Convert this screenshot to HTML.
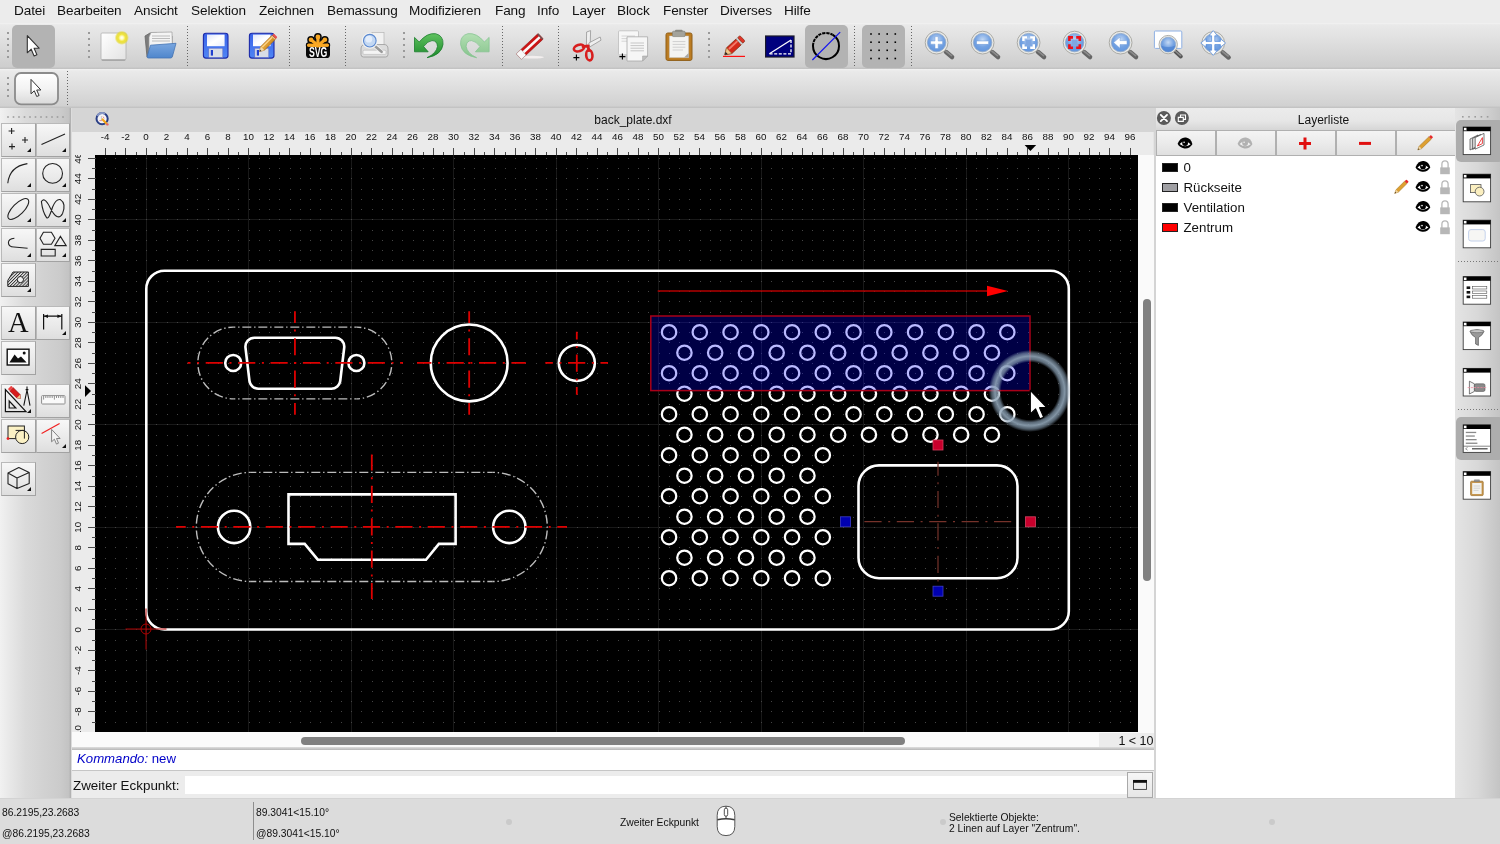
<!DOCTYPE html>
<html lang="de"><head><meta charset="utf-8"><title>back_plate.dxf - QCAD</title>
<style>
html,body{margin:0;padding:0}
body{width:1500px;height:844px;position:relative;overflow:hidden;background:#dcdcdc;font-family:'Liberation Sans',sans-serif;color:#000}
.abs{position:absolute}
svg.abs{will-change:transform}
#app{left:0;top:0;width:1500px;height:844px;will-change:transform}
#menubar{left:0;top:0;width:1500px;height:23px;background:#ececec}
#menubar span{position:absolute;top:2px;font-size:13.6px;line-height:17px;letter-spacing:-0.12px;white-space:nowrap;color:#111}
#tb1{left:0;top:23px;width:1500px;height:46px;background:linear-gradient(#f3f3f3,#e9e9e9 4%,#e2e2e2 30%,#cecece 95%,#c0c0c0)}
#tb2{left:0;top:69px;width:1500px;height:39px;background:linear-gradient(#f3f3f3,#eaeaea 5%,#e3e3e3 30%,#d1d1d1 94%,#bfbfbf)}
.actbtn{position:absolute;background:#b3b3b3;border-radius:5px}
.vdots{position:absolute;width:2px;background:repeating-linear-gradient(#9a9a9a 0 2px,transparent 2px 6px)}
.vsep{position:absolute;width:1px;top:26px;height:41px;background:repeating-linear-gradient(#666 0 1px,transparent 1px 3px)}
#left{left:0;top:108px;width:71px;height:690px;background:linear-gradient(90deg,#f1f1f1,#e9e9e9 12%,#dadada 36%,#d2d2d2 60%,#cbcbcb 85%,#c3c3c3 97%,#adadad)}
.tbtn{position:absolute;width:33.5px;height:33.5px;box-sizing:border-box;border:1px solid #b9b9b9;border-right-color:#a2a2a2;border-bottom-color:#a2a2a2;background:linear-gradient(#f7f7f7,#e9e9e9 60%,#dedede)}
.tbtn i{position:absolute;right:3.4px;bottom:3.4px;width:0;height:0;border-left:4.8px solid transparent;border-bottom:4.8px solid #111}
#tabbar{left:72px;top:108px;width:1081.5px;height:24px;background:#d5d5d5}
#tabbar span{position:absolute;left:0;width:1122px;text-align:center;top:5px;font-size:12px;line-height:14px;color:#111}
#hscroll{left:72px;top:732px;width:1081.5px;height:18px;background:#fafafa}
#hsep{left:72px;top:747.3px;width:1081.5px;height:2.7px;background:linear-gradient(#dedede,#b6b6b6)}
#vscroll{left:1138px;top:155px;width:15.5px;height:577px;background:#fafafa}
.thumb{position:absolute;background:#808080;border-radius:5px}
#zoomlbl{left:1099px;top:733px;width:54.5px;height:15px;background:#ececec;font-size:12.5px;line-height:16px;text-align:right;color:#111}
#cmdhist{left:72px;top:750px;width:1081.5px;height:21px;background:#fff;border-bottom:1px solid #c6c6c6;box-sizing:border-box;font-size:13.2px;line-height:17px;color:#0000c8}
#cmdline{left:72px;top:771px;width:1081.5px;height:27px;background:#ececec}
#cmdline .lbl{position:absolute;left:1px;top:7px;font-size:13.4px;line-height:16px;color:#111}
#cmdline .inp{position:absolute;left:113px;top:4.7px;width:942.3px;height:18.2px;background:#fff}
#cmdline .btn{position:absolute;left:1055.3px;top:1.4px;width:25.8px;height:25.2px;box-sizing:border-box;border:1px solid #a9a9a9;background:linear-gradient(#f6f6f6,#e6e6e6)}
#layers{left:1153.5px;top:108px;width:301.5px;height:690px;background:#fff;border-left:2px solid #d4d4d4;box-sizing:border-box}
#ltitle{left:0;top:0;width:300px;height:22px;box-sizing:border-box;padding-left:36px;padding-top:2px;background:linear-gradient(#ececec,#e6e6e6 60%,#d6d6d6);font-size:12px;line-height:21px;text-align:center;color:#111}
#lbtns{left:0;top:22px;width:300px;height:26px;background:#b0b0b0}
.lbtn{position:absolute;top:1px;height:24px;width:58px;background:linear-gradient(#f4f4f4,#ebebeb 50%,#e0e0e0)}
.lrow{position:absolute;left:0;width:300px;height:20px;font-size:13.3px;line-height:21px;color:#111}
.lrow .sw{position:absolute;left:6px;top:6px;width:16px;height:9px;box-sizing:border-box;border:1px solid #222}
.lrow span{position:absolute;left:28px;top:0}
#rstrip{left:1455px;top:108px;width:45px;height:690px;background:linear-gradient(90deg,#e4e4e4,#d8d8d8 50%,#c4c4c4)}
.hdots{position:absolute;height:1px;background:repeating-linear-gradient(90deg,#777 0 1px,transparent 1px 3px)}
#status{left:0;top:798px;width:1500px;height:46px;background:#dcdcdc;font-size:10.3px;color:#111}
#status span{position:absolute;white-space:nowrap;line-height:12px;letter-spacing:0}
.sdot{position:absolute;width:6px;height:6px;border-radius:3px;background:#cacaca;top:21px}
</style></head><body><div id="app" class="abs">
<div id="menubar" class="abs"><span style="left:14px">Datei</span><span style="left:57px">Bearbeiten</span><span style="left:134px">Ansicht</span><span style="left:191px">Selektion</span><span style="left:259px">Zeichnen</span><span style="left:327px">Bemassung</span><span style="left:409px">Modifizieren</span><span style="left:495px">Fang</span><span style="left:537px">Info</span><span style="left:572px">Layer</span><span style="left:617px">Block</span><span style="left:663px">Fenster</span><span style="left:720px">Diverses</span><span style="left:784px">Hilfe</span></div>
<div id="tb1" class="abs">
<div class="actbtn" style="left:12px;top:2px;width:43px;height:43px"></div>
<div class="actbtn" style="left:805px;top:2px;width:43px;height:43px"></div>
<div class="actbtn" style="left:862px;top:2px;width:43px;height:43px"></div>
<div class="vdots" style="left:7px;top:9px;height:26px"></div>
<div class="vdots" style="left:88px;top:9px;height:26px"></div>
<div class="vdots" style="left:403px;top:9px;height:26px"></div>
<div class="vdots" style="left:708px;top:9px;height:26px"></div>
<div class="vsep" style="left:187px;top:3px"></div>
<div class="vsep" style="left:289px;top:3px"></div>
<div class="vsep" style="left:345px;top:3px"></div>
<div class="vsep" style="left:502px;top:3px"></div>
<div class="vsep" style="left:558px;top:3px"></div>
<div class="vsep" style="left:854px;top:3px"></div>
<div class="vsep" style="left:911px;top:3px"></div>
</div>
<div id="tb2" class="abs">
<div class="vdots" style="left:7px;top:8px;height:22px"></div>
<div class="vsep" style="left:67px;top:2px;height:35px"></div>
</div>
<div id="left" class="abs"><div class="tbtn" style="left:1.3px;top:15px;width:34.3px"><i></i></div><div class="tbtn" style="left:36.4px;top:15px;width:33.7px"><i></i></div><div class="tbtn" style="left:1.3px;top:50px;width:34.3px"><i></i></div><div class="tbtn" style="left:36.4px;top:50px;width:33.7px"><i></i></div><div class="tbtn" style="left:1.3px;top:85px;width:34.3px"><i></i></div><div class="tbtn" style="left:36.4px;top:85px;width:33.7px"><i></i></div><div class="tbtn" style="left:1.3px;top:120px;width:34.3px"><i></i></div><div class="tbtn" style="left:36.4px;top:120px;width:33.7px"><i></i></div><div class="tbtn" style="left:1.3px;top:155px;width:34.3px"><i></i></div><div class="tbtn" style="left:1.3px;top:198px;width:34.3px"></div><div class="tbtn" style="left:36.4px;top:198px;width:33.7px"><i></i></div><div class="tbtn" style="left:1.3px;top:233px;width:34.3px"></div><div class="tbtn" style="left:1.3px;top:276px;width:34.3px"><i></i></div><div class="tbtn" style="left:36.4px;top:276px;width:33.7px"></div><div class="tbtn" style="left:1.3px;top:311px;width:34.3px"></div><div class="tbtn" style="left:36.4px;top:311px;width:33.7px"><i></i></div><div class="tbtn" style="left:1.3px;top:354px;width:34.3px"><i></i></div></div>
<div id="tabbar" class="abs"><span>back_plate.dxf</span></div>
<div id="vscroll" class="abs"><div class="thumb" style="left:5px;top:143.5px;width:8px;height:282px"></div></div>
<div id="hscroll" class="abs"><div class="thumb" style="left:229px;top:5px;width:604px;height:8px"></div></div>
<div id="zoomlbl" class="abs">1 &lt; 10</div><div id="hsep" class="abs"></div>
<div id="cmdhist" class="abs"><span style="position:absolute;left:5px;top:0"><i>Kommando:</i> new</span></div>
<div id="cmdline" class="abs"><span class="lbl">Zweiter Eckpunkt:</span><div class="inp"></div><div class="btn"></div></div>
<div id="layers" class="abs"><div id="ltitle" class="abs">Layerliste</div><div id="lbtns" class="abs">
<div class="lbtn" style="left:1px"></div>
<div class="lbtn" style="left:61px"></div>
<div class="lbtn" style="left:121px"></div>
<div class="lbtn" style="left:181px"></div>
<div class="lbtn" style="left:241px"></div>
</div>
<div class="lrow" style="top:49px"><div class="sw" style="background:#000"></div><span>0</span></div>
<div class="lrow" style="top:69px"><div class="sw" style="background:#a0a0a4"></div><span>Rückseite</span></div>
<div class="lrow" style="top:89px"><div class="sw" style="background:#000"></div><span>Ventilation</span></div>
<div class="lrow" style="top:109px"><div class="sw" style="background:#f00"></div><span>Zentrum</span></div>
</div>
<div id="rstrip" class="abs">
<div class="actbtn" style="left:1px;top:12px;width:48px;height:42px;background:#adadad"></div>
<div class="actbtn" style="left:1px;top:309px;width:48px;height:43px;background:#adadad"></div>
<div class="hdots" style="left:3px;top:153px;width:42px"></div>
<div class="hdots" style="left:3px;top:301px;width:42px"></div>
</div>
<div id="status" class="abs"><div class="abs" style="left:0;top:0;width:1500px;height:1px;background:#d3d3d3"></div>
<span style="left:2px;top:9px">86.2195,23.2683</span><span style="left:2px;top:29.5px">@86.2195,23.2683</span>
<div class="abs" style="left:253px;top:4px;width:1px;height:38px;background:#8e8e8e"></div>
<span style="left:256px;top:9px">89.3041&lt;15.10°</span><span style="left:256px;top:29.5px">@89.3041&lt;15.10°</span>
<span style="left:620px;top:19px">Zweiter Eckpunkt</span>
<span style="left:949px;top:13.7px">Selektierte Objekte:</span><span style="left:949px;top:24.7px">2 Linen auf Layer "Zentrum".</span>
<div class="sdot" style="left:506px"></div>
<div class="sdot" style="left:940px"></div>
<div class="sdot" style="left:1269px"></div>
</div>
<svg class="abs" style="left:0;top:0" width="1500" height="844" viewBox="0 0 1500 844">
<defs>
<pattern id="dots" x="146" y="588" width="41" height="41" patternUnits="userSpaceOnUse"><g fill="#444" shape-rendering="crispEdges"><rect x="0" y="0" width="1" height="1"/><rect x="0" y="11" width="1" height="1"/><rect x="0" y="21" width="1" height="1"/><rect x="0" y="31" width="1" height="1"/><rect x="10" y="0" width="1" height="1"/><rect x="10" y="11" width="1" height="1"/><rect x="10" y="21" width="1" height="1"/><rect x="10" y="31" width="1" height="1"/><rect x="21" y="0" width="1" height="1"/><rect x="21" y="11" width="1" height="1"/><rect x="21" y="21" width="1" height="1"/><rect x="21" y="31" width="1" height="1"/><rect x="31" y="0" width="1" height="1"/><rect x="31" y="11" width="1" height="1"/><rect x="31" y="21" width="1" height="1"/><rect x="31" y="31" width="1" height="1"/></g></pattern>
<clipPath id="cclip"><rect x="95" y="155" width="1043" height="577"/></clipPath>
<clipPath id="vrclip"><rect x="72" y="155" width="23" height="577"/></clipPath>
<radialGradient id="glow" cx="0.5" cy="0.5" r="0.5"><stop offset="0.70" stop-color="#8298ac" stop-opacity="0"/><stop offset="0.77" stop-color="#8298ac" stop-opacity="0.7"/><stop offset="0.85" stop-color="#93a8ba" stop-opacity="0.88"/><stop offset="0.93" stop-color="#8298ac" stop-opacity="0.6"/><stop offset="1" stop-color="#8298ac" stop-opacity="0"/></radialGradient>
</defs>
<rect x="72" y="132" width="1081.5" height="23" fill="#ebebeb"/>
<rect x="72" y="132" width="23" height="600" fill="#ebebeb"/>
<rect x="95" y="155" width="1043" height="577" fill="#000"/>
<g clip-path="url(#cclip)">
<rect x="146" y="155" width="1" height="577" fill="#191919"/>
<rect x="248" y="155" width="1" height="577" fill="#191919"/>
<rect x="351" y="155" width="1" height="577" fill="#191919"/>
<rect x="453" y="155" width="1" height="577" fill="#191919"/>
<rect x="556" y="155" width="1" height="577" fill="#191919"/>
<rect x="658" y="155" width="1" height="577" fill="#191919"/>
<rect x="761" y="155" width="1" height="577" fill="#191919"/>
<rect x="863" y="155" width="1" height="577" fill="#191919"/>
<rect x="966" y="155" width="1" height="577" fill="#191919"/>
<rect x="1068" y="155" width="1" height="577" fill="#191919"/>
<rect x="95" y="732" width="1043" height="1" fill="#191919"/>
<rect x="95" y="629" width="1043" height="1" fill="#191919"/>
<rect x="95" y="527" width="1043" height="1" fill="#191919"/>
<rect x="95" y="424" width="1043" height="1" fill="#191919"/>
<rect x="95" y="322" width="1043" height="1" fill="#191919"/>
<rect x="95" y="219" width="1043" height="1" fill="#191919"/>
<rect x="95" y="155" width="1043" height="577" fill="url(#dots)"/>
<rect x="146.3" y="270.7" width="922.5" height="358.75" rx="18.2" fill="none" stroke="#fff" stroke-width="2.6"/>
<path d="M233.12 327.08 H356.53" fill="none" stroke="#bcbcbc" stroke-width="1.4" stroke-dasharray="9 2.8 1.4 2.8" stroke-dashoffset="6.8"/>
<path d="M233.12 398.83 H356.53" fill="none" stroke="#bcbcbc" stroke-width="1.4" stroke-dasharray="9 2.8 1.4 2.8" stroke-dashoffset="6.8"/>
<path d="M233.12 327.08 A35.88 35.88 0 0 0 233.12 398.83" fill="none" stroke="#bcbcbc" stroke-width="1.4" stroke-dasharray="9 2.8 1.4 2.8" stroke-dashoffset="4.15"/>
<path d="M356.53 327.08 A35.88 35.88 0 0 1 356.53 398.83" fill="none" stroke="#bcbcbc" stroke-width="1.4" stroke-dasharray="9 2.8 1.4 2.8" stroke-dashoffset="4.15"/>
<path d="M245.50 347.77 A9 9 0 0 1 254.44 337.70 L335.26 337.70 A9 9 0 0 1 344.20 347.77 L340.25 380.77 A9 9 0 0 1 331.31 388.70 L258.39 388.70 A9 9 0 0 1 249.45 380.77 Z" fill="none" stroke="#fff" stroke-width="2.6"/>
<circle cx="233.2" cy="362.95" r="8" fill="none" stroke="#fff" stroke-width="2.6"/>
<circle cx="356.4" cy="362.95" r="8" fill="none" stroke="#fff" stroke-width="2.6"/>
<circle cx="469.18" cy="362.95" r="38.4" fill="none" stroke="#fff" stroke-width="2.6"/>
<circle cx="576.8" cy="362.95" r="18" fill="none" stroke="#fff" stroke-width="2.6"/>
<path d="M250.9 472.35 H492.7" fill="none" stroke="#bcbcbc" stroke-width="1.4" stroke-dasharray="9 2.8 1.4 2.8" stroke-dashoffset="3.6"/>
<path d="M250.9 581.55 H492.7" fill="none" stroke="#bcbcbc" stroke-width="1.4" stroke-dasharray="9 2.8 1.4 2.8" stroke-dashoffset="3.6"/>
<path d="M250.9 472.35 A54.6 54.6 0 0 0 250.9 581.55" fill="none" stroke="#bcbcbc" stroke-width="1.4" stroke-dasharray="9 2.8 1.4 2.8" stroke-dashoffset="6.73"/>
<path d="M492.7 472.35 A54.6 54.6 0 0 1 492.7 581.55" fill="none" stroke="#bcbcbc" stroke-width="1.4" stroke-dasharray="9 2.8 1.4 2.8" stroke-dashoffset="6.73"/>
<path d="M288.5 494.4 H455.6 V543.9 H438.9 L426 559.7 H317.8 L304.7 543.9 H288.5 Z" fill="none" stroke="#fff" stroke-width="2.6" stroke-linejoin="miter"/>
<circle cx="234.1" cy="526.95" r="16.2" fill="none" stroke="#fff" stroke-width="2.6"/>
<circle cx="509.3" cy="526.95" r="16.2" fill="none" stroke="#fff" stroke-width="2.6"/>
<g fill="none" stroke="#fff" stroke-width="2.25">
<circle cx="669.05" cy="332.2" r="7.2"/>
<circle cx="699.8" cy="332.2" r="7.2"/>
<circle cx="730.55" cy="332.2" r="7.2"/>
<circle cx="761.3" cy="332.2" r="7.2"/>
<circle cx="792.05" cy="332.2" r="7.2"/>
<circle cx="822.8" cy="332.2" r="7.2"/>
<circle cx="853.55" cy="332.2" r="7.2"/>
<circle cx="884.3" cy="332.2" r="7.2"/>
<circle cx="915.05" cy="332.2" r="7.2"/>
<circle cx="945.8" cy="332.2" r="7.2"/>
<circle cx="976.55" cy="332.2" r="7.2"/>
<circle cx="1007.3" cy="332.2" r="7.2"/>
<circle cx="684.42" cy="352.7" r="7.2"/>
<circle cx="715.17" cy="352.7" r="7.2"/>
<circle cx="745.92" cy="352.7" r="7.2"/>
<circle cx="776.67" cy="352.7" r="7.2"/>
<circle cx="807.42" cy="352.7" r="7.2"/>
<circle cx="838.17" cy="352.7" r="7.2"/>
<circle cx="868.92" cy="352.7" r="7.2"/>
<circle cx="899.67" cy="352.7" r="7.2"/>
<circle cx="930.42" cy="352.7" r="7.2"/>
<circle cx="961.17" cy="352.7" r="7.2"/>
<circle cx="991.92" cy="352.7" r="7.2"/>
<circle cx="669.05" cy="373.2" r="7.2"/>
<circle cx="699.8" cy="373.2" r="7.2"/>
<circle cx="730.55" cy="373.2" r="7.2"/>
<circle cx="761.3" cy="373.2" r="7.2"/>
<circle cx="792.05" cy="373.2" r="7.2"/>
<circle cx="822.8" cy="373.2" r="7.2"/>
<circle cx="853.55" cy="373.2" r="7.2"/>
<circle cx="884.3" cy="373.2" r="7.2"/>
<circle cx="915.05" cy="373.2" r="7.2"/>
<circle cx="945.8" cy="373.2" r="7.2"/>
<circle cx="976.55" cy="373.2" r="7.2"/>
<circle cx="1007.3" cy="373.2" r="7.2"/>
<circle cx="684.42" cy="393.7" r="7.2"/>
<circle cx="715.17" cy="393.7" r="7.2"/>
<circle cx="745.92" cy="393.7" r="7.2"/>
<circle cx="776.67" cy="393.7" r="7.2"/>
<circle cx="807.42" cy="393.7" r="7.2"/>
<circle cx="838.17" cy="393.7" r="7.2"/>
<circle cx="868.92" cy="393.7" r="7.2"/>
<circle cx="899.67" cy="393.7" r="7.2"/>
<circle cx="930.42" cy="393.7" r="7.2"/>
<circle cx="961.17" cy="393.7" r="7.2"/>
<circle cx="991.92" cy="393.7" r="7.2"/>
<circle cx="669.05" cy="414.2" r="7.2"/>
<circle cx="699.8" cy="414.2" r="7.2"/>
<circle cx="730.55" cy="414.2" r="7.2"/>
<circle cx="761.3" cy="414.2" r="7.2"/>
<circle cx="792.05" cy="414.2" r="7.2"/>
<circle cx="822.8" cy="414.2" r="7.2"/>
<circle cx="853.55" cy="414.2" r="7.2"/>
<circle cx="884.3" cy="414.2" r="7.2"/>
<circle cx="915.05" cy="414.2" r="7.2"/>
<circle cx="945.8" cy="414.2" r="7.2"/>
<circle cx="976.55" cy="414.2" r="7.2"/>
<circle cx="1007.3" cy="414.2" r="7.2"/>
<circle cx="684.42" cy="434.7" r="7.2"/>
<circle cx="715.17" cy="434.7" r="7.2"/>
<circle cx="745.92" cy="434.7" r="7.2"/>
<circle cx="776.67" cy="434.7" r="7.2"/>
<circle cx="807.42" cy="434.7" r="7.2"/>
<circle cx="838.17" cy="434.7" r="7.2"/>
<circle cx="868.92" cy="434.7" r="7.2"/>
<circle cx="899.67" cy="434.7" r="7.2"/>
<circle cx="930.42" cy="434.7" r="7.2"/>
<circle cx="961.17" cy="434.7" r="7.2"/>
<circle cx="991.92" cy="434.7" r="7.2"/>
<circle cx="669.05" cy="455.2" r="7.2"/>
<circle cx="699.8" cy="455.2" r="7.2"/>
<circle cx="730.55" cy="455.2" r="7.2"/>
<circle cx="761.3" cy="455.2" r="7.2"/>
<circle cx="792.05" cy="455.2" r="7.2"/>
<circle cx="822.8" cy="455.2" r="7.2"/>
<circle cx="684.42" cy="475.7" r="7.2"/>
<circle cx="715.17" cy="475.7" r="7.2"/>
<circle cx="745.92" cy="475.7" r="7.2"/>
<circle cx="776.67" cy="475.7" r="7.2"/>
<circle cx="807.42" cy="475.7" r="7.2"/>
<circle cx="669.05" cy="496.2" r="7.2"/>
<circle cx="699.8" cy="496.2" r="7.2"/>
<circle cx="730.55" cy="496.2" r="7.2"/>
<circle cx="761.3" cy="496.2" r="7.2"/>
<circle cx="792.05" cy="496.2" r="7.2"/>
<circle cx="822.8" cy="496.2" r="7.2"/>
<circle cx="684.42" cy="516.7" r="7.2"/>
<circle cx="715.17" cy="516.7" r="7.2"/>
<circle cx="745.92" cy="516.7" r="7.2"/>
<circle cx="776.67" cy="516.7" r="7.2"/>
<circle cx="807.42" cy="516.7" r="7.2"/>
<circle cx="669.05" cy="537.2" r="7.2"/>
<circle cx="699.8" cy="537.2" r="7.2"/>
<circle cx="730.55" cy="537.2" r="7.2"/>
<circle cx="761.3" cy="537.2" r="7.2"/>
<circle cx="792.05" cy="537.2" r="7.2"/>
<circle cx="822.8" cy="537.2" r="7.2"/>
<circle cx="684.42" cy="557.7" r="7.2"/>
<circle cx="715.17" cy="557.7" r="7.2"/>
<circle cx="745.92" cy="557.7" r="7.2"/>
<circle cx="776.67" cy="557.7" r="7.2"/>
<circle cx="807.42" cy="557.7" r="7.2"/>
<circle cx="669.05" cy="578.2" r="7.2"/>
<circle cx="699.8" cy="578.2" r="7.2"/>
<circle cx="730.55" cy="578.2" r="7.2"/>
<circle cx="761.3" cy="578.2" r="7.2"/>
<circle cx="792.05" cy="578.2" r="7.2"/>
<circle cx="822.8" cy="578.2" r="7.2"/>
</g>
<rect x="858.5" y="465.4" width="159" height="112.8" rx="20.5" fill="none" stroke="#fff" stroke-width="2.6"/>
<path d="M187.6 362.95 H403" fill="none" stroke="#de0000" stroke-width="1.8" stroke-dasharray="17.2 6.6 2 6.6" stroke-dashoffset="14.3"/>
<path d="M294.93 311.2 V414.7" fill="none" stroke="#de0000" stroke-width="1.8" stroke-dasharray="17.2 6.6 2 6.6" stroke-dashoffset="5.45"/>
<path d="M417 362.95 H525.8" fill="none" stroke="#de0000" stroke-width="1.8" stroke-dasharray="17.2 6.6 2 6.6" stroke-dashoffset="2.8"/>
<path d="M469.18 311.2 V414.7" fill="none" stroke="#de0000" stroke-width="1.8" stroke-dasharray="17.2 6.6 2 6.6" stroke-dashoffset="5.45"/>
<path d="M545.3 362.95 H608" fill="none" stroke="#de0000" stroke-width="1.8" stroke-dasharray="17.2 6.6 2 6.6" stroke-dashoffset="9.65"/>
<path d="M576.8 331.7 V394.7" fill="none" stroke="#de0000" stroke-width="1.8" stroke-dasharray="17.2 6.6 2 6.6" stroke-dashoffset="9.5"/>
<path d="M176 526.95 H567" fill="none" stroke="#de0000" stroke-width="1.8" stroke-dasharray="17.2 6.6 2 6.6" stroke-dashoffset="7.5"/>
<path d="M371.8 454.5 V599.1" fill="none" stroke="#de0000" stroke-width="1.8" stroke-dasharray="17.2 6.6 2 6.6" stroke-dashoffset="1.1"/>
<path d="M858 521.7 H1017.6" fill="none" stroke="#76322a" stroke-width="1.2" stroke-dasharray="17.2 6.6 2 6.6" stroke-dashoffset="26"/>
<path d="M938 461.7 V583" fill="none" stroke="#76322a" stroke-width="1.2" stroke-dasharray="17.2 6.6 2 6.6" stroke-dashoffset="3.2"/>
<g stroke="#b00000" stroke-width="1" fill="none"><path d="M125.5 629 H166.5 M146 608.5 V649.5"/><circle cx="146" cy="629" r="5"/></g>
<path d="M657.7 291 H990" stroke="#b40000" stroke-width="1.5" fill="none"/>
<path d="M987 285.8 L1008 291 L987 296.2 Z" fill="#ff0000"/>
<rect x="650.8" y="316" width="379.2" height="74.6" fill="#0000ff" fill-opacity="0.27" stroke="#a80018" stroke-width="1.5"/>
<rect x="933" y="440" width="10" height="10" fill="#c8002c" stroke="#d84060" stroke-width="0.8"/>
<rect x="1025.5" y="516.8" width="10" height="10" fill="#c8002c" stroke="#d84060" stroke-width="0.8"/>
<rect x="840.6" y="516.8" width="10" height="10" fill="#0000b0" stroke="#3c3cc8" stroke-width="0.8"/>
<rect x="933" y="586.2" width="10" height="10" fill="#0000b0" stroke="#3c3cc8" stroke-width="0.8"/>
<circle cx="1029.8" cy="391" r="41" fill="url(#glow)"/>
<path d="M1030.3 390.3 L1030.3 413.9 L1035.6 408.9 L1039.9 418.9 L1043.7 417.2 L1039.6 407.7 L1046.8 407.7 Z" fill="#fff" stroke="#000" stroke-width="1.2" stroke-linejoin="round"/>
</g>
<g fill="#4a4a4a">
<rect x="105" y="148" width="1" height="7"/>
<rect x="115" y="152" width="1" height="3"/>
<rect x="125" y="148" width="1" height="7"/>
<rect x="136" y="152" width="1" height="3"/>
<rect x="146" y="148" width="1" height="7"/>
<rect x="156" y="152" width="1" height="3"/>
<rect x="166" y="148" width="1" height="7"/>
<rect x="177" y="152" width="1" height="3"/>
<rect x="187" y="148" width="1" height="7"/>
<rect x="197" y="152" width="1" height="3"/>
<rect x="207" y="148" width="1" height="7"/>
<rect x="218" y="152" width="1" height="3"/>
<rect x="228" y="148" width="1" height="7"/>
<rect x="238" y="152" width="1" height="3"/>
<rect x="248" y="148" width="1" height="7"/>
<rect x="259" y="152" width="1" height="3"/>
<rect x="269" y="148" width="1" height="7"/>
<rect x="279" y="152" width="1" height="3"/>
<rect x="289" y="148" width="1" height="7"/>
<rect x="300" y="152" width="1" height="3"/>
<rect x="310" y="148" width="1" height="7"/>
<rect x="320" y="152" width="1" height="3"/>
<rect x="330" y="148" width="1" height="7"/>
<rect x="341" y="152" width="1" height="3"/>
<rect x="351" y="148" width="1" height="7"/>
<rect x="361" y="152" width="1" height="3"/>
<rect x="371" y="148" width="1" height="7"/>
<rect x="382" y="152" width="1" height="3"/>
<rect x="392" y="148" width="1" height="7"/>
<rect x="402" y="152" width="1" height="3"/>
<rect x="412" y="148" width="1" height="7"/>
<rect x="423" y="152" width="1" height="3"/>
<rect x="433" y="148" width="1" height="7"/>
<rect x="443" y="152" width="1" height="3"/>
<rect x="453" y="148" width="1" height="7"/>
<rect x="464" y="152" width="1" height="3"/>
<rect x="474" y="148" width="1" height="7"/>
<rect x="484" y="152" width="1" height="3"/>
<rect x="494" y="148" width="1" height="7"/>
<rect x="505" y="152" width="1" height="3"/>
<rect x="515" y="148" width="1" height="7"/>
<rect x="525" y="152" width="1" height="3"/>
<rect x="535" y="148" width="1" height="7"/>
<rect x="546" y="152" width="1" height="3"/>
<rect x="556" y="148" width="1" height="7"/>
<rect x="566" y="152" width="1" height="3"/>
<rect x="576" y="148" width="1" height="7"/>
<rect x="587" y="152" width="1" height="3"/>
<rect x="597" y="148" width="1" height="7"/>
<rect x="607" y="152" width="1" height="3"/>
<rect x="617" y="148" width="1" height="7"/>
<rect x="628" y="152" width="1" height="3"/>
<rect x="638" y="148" width="1" height="7"/>
<rect x="648" y="152" width="1" height="3"/>
<rect x="658" y="148" width="1" height="7"/>
<rect x="669" y="152" width="1" height="3"/>
<rect x="679" y="148" width="1" height="7"/>
<rect x="689" y="152" width="1" height="3"/>
<rect x="699" y="148" width="1" height="7"/>
<rect x="710" y="152" width="1" height="3"/>
<rect x="720" y="148" width="1" height="7"/>
<rect x="730" y="152" width="1" height="3"/>
<rect x="740" y="148" width="1" height="7"/>
<rect x="751" y="152" width="1" height="3"/>
<rect x="761" y="148" width="1" height="7"/>
<rect x="771" y="152" width="1" height="3"/>
<rect x="781" y="148" width="1" height="7"/>
<rect x="792" y="152" width="1" height="3"/>
<rect x="802" y="148" width="1" height="7"/>
<rect x="812" y="152" width="1" height="3"/>
<rect x="822" y="148" width="1" height="7"/>
<rect x="833" y="152" width="1" height="3"/>
<rect x="843" y="148" width="1" height="7"/>
<rect x="853" y="152" width="1" height="3"/>
<rect x="863" y="148" width="1" height="7"/>
<rect x="874" y="152" width="1" height="3"/>
<rect x="884" y="148" width="1" height="7"/>
<rect x="894" y="152" width="1" height="3"/>
<rect x="904" y="148" width="1" height="7"/>
<rect x="915" y="152" width="1" height="3"/>
<rect x="925" y="148" width="1" height="7"/>
<rect x="935" y="152" width="1" height="3"/>
<rect x="945" y="148" width="1" height="7"/>
<rect x="956" y="152" width="1" height="3"/>
<rect x="966" y="148" width="1" height="7"/>
<rect x="976" y="152" width="1" height="3"/>
<rect x="986" y="148" width="1" height="7"/>
<rect x="997" y="152" width="1" height="3"/>
<rect x="1007" y="148" width="1" height="7"/>
<rect x="1017" y="152" width="1" height="3"/>
<rect x="1027" y="148" width="1" height="7"/>
<rect x="1038" y="152" width="1" height="3"/>
<rect x="1048" y="148" width="1" height="7"/>
<rect x="1058" y="152" width="1" height="3"/>
<rect x="1068" y="148" width="1" height="7"/>
<rect x="1079" y="152" width="1" height="3"/>
<rect x="1089" y="148" width="1" height="7"/>
<rect x="1099" y="152" width="1" height="3"/>
<rect x="1109" y="148" width="1" height="7"/>
<rect x="1120" y="152" width="1" height="3"/>
<rect x="1130" y="148" width="1" height="7"/>
<rect x="92" y="722" width="3" height="1"/>
<rect x="88" y="711" width="7" height="1"/>
<rect x="92" y="701" width="3" height="1"/>
<rect x="88" y="691" width="7" height="1"/>
<rect x="92" y="681" width="3" height="1"/>
<rect x="88" y="670" width="7" height="1"/>
<rect x="92" y="660" width="3" height="1"/>
<rect x="88" y="650" width="7" height="1"/>
<rect x="92" y="640" width="3" height="1"/>
<rect x="88" y="629" width="7" height="1"/>
<rect x="92" y="619" width="3" height="1"/>
<rect x="88" y="609" width="7" height="1"/>
<rect x="92" y="599" width="3" height="1"/>
<rect x="88" y="588" width="7" height="1"/>
<rect x="92" y="578" width="3" height="1"/>
<rect x="88" y="568" width="7" height="1"/>
<rect x="92" y="558" width="3" height="1"/>
<rect x="88" y="547" width="7" height="1"/>
<rect x="92" y="537" width="3" height="1"/>
<rect x="88" y="527" width="7" height="1"/>
<rect x="92" y="517" width="3" height="1"/>
<rect x="88" y="506" width="7" height="1"/>
<rect x="92" y="496" width="3" height="1"/>
<rect x="88" y="486" width="7" height="1"/>
<rect x="92" y="476" width="3" height="1"/>
<rect x="88" y="465" width="7" height="1"/>
<rect x="92" y="455" width="3" height="1"/>
<rect x="88" y="445" width="7" height="1"/>
<rect x="92" y="435" width="3" height="1"/>
<rect x="88" y="424" width="7" height="1"/>
<rect x="92" y="414" width="3" height="1"/>
<rect x="88" y="404" width="7" height="1"/>
<rect x="92" y="394" width="3" height="1"/>
<rect x="88" y="383" width="7" height="1"/>
<rect x="92" y="373" width="3" height="1"/>
<rect x="88" y="363" width="7" height="1"/>
<rect x="92" y="353" width="3" height="1"/>
<rect x="88" y="342" width="7" height="1"/>
<rect x="92" y="332" width="3" height="1"/>
<rect x="88" y="322" width="7" height="1"/>
<rect x="92" y="312" width="3" height="1"/>
<rect x="88" y="301" width="7" height="1"/>
<rect x="92" y="291" width="3" height="1"/>
<rect x="88" y="281" width="7" height="1"/>
<rect x="92" y="271" width="3" height="1"/>
<rect x="88" y="260" width="7" height="1"/>
<rect x="92" y="250" width="3" height="1"/>
<rect x="88" y="240" width="7" height="1"/>
<rect x="92" y="230" width="3" height="1"/>
<rect x="88" y="219" width="7" height="1"/>
<rect x="92" y="209" width="3" height="1"/>
<rect x="88" y="199" width="7" height="1"/>
<rect x="92" y="189" width="3" height="1"/>
<rect x="88" y="178" width="7" height="1"/>
<rect x="92" y="168" width="3" height="1"/>
<rect x="88" y="158" width="7" height="1"/>
</g>
<g font-family="'Liberation Sans', sans-serif" font-size="9.8" fill="#111" text-anchor="middle">
<text transform="translate(105 140.3)">-4</text>
<text transform="translate(125.5 140.3)">-2</text>
<text transform="translate(146 140.3)">0</text>
<text transform="translate(166.5 140.3)">2</text>
<text transform="translate(187 140.3)">4</text>
<text transform="translate(207.5 140.3)">6</text>
<text transform="translate(228 140.3)">8</text>
<text transform="translate(248.5 140.3)">10</text>
<text transform="translate(269 140.3)">12</text>
<text transform="translate(289.5 140.3)">14</text>
<text transform="translate(310 140.3)">16</text>
<text transform="translate(330.5 140.3)">18</text>
<text transform="translate(351 140.3)">20</text>
<text transform="translate(371.5 140.3)">22</text>
<text transform="translate(392 140.3)">24</text>
<text transform="translate(412.5 140.3)">26</text>
<text transform="translate(433 140.3)">28</text>
<text transform="translate(453.5 140.3)">30</text>
<text transform="translate(474 140.3)">32</text>
<text transform="translate(494.5 140.3)">34</text>
<text transform="translate(515 140.3)">36</text>
<text transform="translate(535.5 140.3)">38</text>
<text transform="translate(556 140.3)">40</text>
<text transform="translate(576.5 140.3)">42</text>
<text transform="translate(597 140.3)">44</text>
<text transform="translate(617.5 140.3)">46</text>
<text transform="translate(638 140.3)">48</text>
<text transform="translate(658.5 140.3)">50</text>
<text transform="translate(679 140.3)">52</text>
<text transform="translate(699.5 140.3)">54</text>
<text transform="translate(720 140.3)">56</text>
<text transform="translate(740.5 140.3)">58</text>
<text transform="translate(761 140.3)">60</text>
<text transform="translate(781.5 140.3)">62</text>
<text transform="translate(802 140.3)">64</text>
<text transform="translate(822.5 140.3)">66</text>
<text transform="translate(843 140.3)">68</text>
<text transform="translate(863.5 140.3)">70</text>
<text transform="translate(884 140.3)">72</text>
<text transform="translate(904.5 140.3)">74</text>
<text transform="translate(925 140.3)">76</text>
<text transform="translate(945.5 140.3)">78</text>
<text transform="translate(966 140.3)">80</text>
<text transform="translate(986.5 140.3)">82</text>
<text transform="translate(1007 140.3)">84</text>
<text transform="translate(1027.5 140.3)">86</text>
<text transform="translate(1048 140.3)">88</text>
<text transform="translate(1068.5 140.3)">90</text>
<text transform="translate(1089 140.3)">92</text>
<text transform="translate(1109.5 140.3)">94</text>
<text transform="translate(1130 140.3)">96</text>
</g>
<g clip-path="url(#vrclip)" font-family="'Liberation Sans', sans-serif" font-size="9.8" fill="#111" text-anchor="middle">
<text transform="translate(81.4 732.25) rotate(-90)">-10</text>
<text transform="translate(81.4 711.75) rotate(-90)">-8</text>
<text transform="translate(81.4 691.25) rotate(-90)">-6</text>
<text transform="translate(81.4 670.75) rotate(-90)">-4</text>
<text transform="translate(81.4 650.25) rotate(-90)">-2</text>
<text transform="translate(81.4 629.75) rotate(-90)">0</text>
<text transform="translate(81.4 609.25) rotate(-90)">2</text>
<text transform="translate(81.4 588.75) rotate(-90)">4</text>
<text transform="translate(81.4 568.25) rotate(-90)">6</text>
<text transform="translate(81.4 547.75) rotate(-90)">8</text>
<text transform="translate(81.4 527.25) rotate(-90)">10</text>
<text transform="translate(81.4 506.75) rotate(-90)">12</text>
<text transform="translate(81.4 486.25) rotate(-90)">14</text>
<text transform="translate(81.4 465.75) rotate(-90)">16</text>
<text transform="translate(81.4 445.25) rotate(-90)">18</text>
<text transform="translate(81.4 424.75) rotate(-90)">20</text>
<text transform="translate(81.4 404.25) rotate(-90)">22</text>
<text transform="translate(81.4 383.75) rotate(-90)">24</text>
<text transform="translate(81.4 363.25) rotate(-90)">26</text>
<text transform="translate(81.4 342.75) rotate(-90)">28</text>
<text transform="translate(81.4 322.25) rotate(-90)">30</text>
<text transform="translate(81.4 301.75) rotate(-90)">32</text>
<text transform="translate(81.4 281.25) rotate(-90)">34</text>
<text transform="translate(81.4 260.75) rotate(-90)">36</text>
<text transform="translate(81.4 240.25) rotate(-90)">38</text>
<text transform="translate(81.4 219.75) rotate(-90)">40</text>
<text transform="translate(81.4 199.25) rotate(-90)">42</text>
<text transform="translate(81.4 178.75) rotate(-90)">44</text>
<text transform="translate(81.4 158.25) rotate(-90)">46</text>
</g>
<path d="M1024.6 145 H1036.2 L1030.4 151 Z" fill="#000"/>
<path d="M85 385.2 V397 L91 391.1 Z" fill="#000"/>
</svg>
<svg class="abs" style="left:0;top:0" width="1500" height="844" viewBox="0 0 1500 844"><defs>

<linearGradient id="gpaper" x1="0" y1="0" x2="1" y2="1"><stop offset="0" stop-color="#fff"/><stop offset="1" stop-color="#e3e3e3"/></linearGradient>
<radialGradient id="gyel"><stop offset="0" stop-color="#ffffff"/><stop offset="0.22" stop-color="#fffcc0"/><stop offset="0.5" stop-color="#f0e43a"/><stop offset="0.75" stop-color="#e6da28" stop-opacity="0.8"/><stop offset="1" stop-color="#e6da28" stop-opacity="0"/></radialGradient>
<linearGradient id="gblue" x1="0" y1="0" x2="0" y2="1"><stop offset="0" stop-color="#7aa7e0"/><stop offset="1" stop-color="#4f86cc"/></linearGradient>
<linearGradient id="gflop" x1="0" y1="0" x2="0" y2="1"><stop offset="0" stop-color="#3a62e8"/><stop offset="1" stop-color="#4f86f4"/></linearGradient>
<linearGradient id="glabel" x1="0" y1="0" x2="1" y2="1"><stop offset="0" stop-color="#dfe6fb"/><stop offset="0.5" stop-color="#fff"/><stop offset="1" stop-color="#e9eefc"/></linearGradient>
<radialGradient id="glens" cx="0.5" cy="0.35" r="0.7"><stop offset="0" stop-color="#c4d9f4"/><stop offset="0.55" stop-color="#74a2e2"/><stop offset="1" stop-color="#5d92dc"/></radialGradient>
<linearGradient id="ggreen" x1="0" y1="0" x2="0" y2="1"><stop offset="0" stop-color="#5fc25f"/><stop offset="1" stop-color="#1e8a2c"/></linearGradient>
<linearGradient id="ggreen2" x1="0" y1="0" x2="0" y2="1"><stop offset="0" stop-color="#b4e0b4"/><stop offset="1" stop-color="#86c38c"/></linearGradient>
<linearGradient id="gpencil" x1="0" y1="0" x2="1" y2="1"><stop offset="0" stop-color="#f2b54a"/><stop offset="1" stop-color="#c9861c"/></linearGradient>
<linearGradient id="gbtn2" x1="0" y1="0" x2="0" y2="1"><stop offset="0" stop-color="#ffffff"/><stop offset="0.5" stop-color="#f3f3f3"/><stop offset="1" stop-color="#d9d9d9"/></linearGradient>


<pattern id="hatch" width="2.2" height="2.2" patternUnits="userSpaceOnUse" patternTransform="rotate(45)"><rect width="2.2" height="2.2" fill="#e8e8e8"/><rect width="0.9" height="2.2" fill="#333"/></pattern>

</defs>
<path d="M27.3 35.6 L27.3 52.8 L31.2 49.2 L34.1 56.0 L36.9 54.8 L34.1 48.2 L39.1 48.2 Z" fill="#fff" stroke="#333" stroke-width="1.1" stroke-linejoin="round"/>
<rect x="101.5" y="58.5" width="24" height="2.2" rx="1" fill="#9a9a9a"/>
<rect x="101" y="33" width="25" height="26.5" rx="1" fill="url(#gpaper)" stroke="#b0b0b0" stroke-width="0.8"/>
<circle cx="121.8" cy="37.8" r="7.2" fill="url(#gyel)"/>
<path d="M145 36 L150 33 L157 33 L158 36 L172 36 L172 57 L147 57 Z" fill="#7c7c7c" stroke="#666" stroke-width="0.8"/>
<path d="M149 37 L151 32.5 L172 32 L172.5 50 L149 52 Z" fill="#f4f4f4" stroke="#9c9c9c" stroke-width="0.7"/>
<path d="M152 36 H170 M152 38.5 H170 M152 41 H170" stroke="#bcbcbc" stroke-width="1"/>
<path d="M150.5 45.2 L176 43.3 L172.4 56.6 Q172 58 170.5 58 L148.5 58 Q146.8 58 147.2 56.4 Z" fill="url(#gblue)" stroke="#4474b4" stroke-width="0.8"/>
<rect x="203.4" y="33.3" width="24.6" height="24.8" rx="2.6" fill="url(#gflop)" stroke="#1c2aa8" stroke-width="1.1"/><rect x="207.0" y="34.6" width="17.6" height="11.6" fill="url(#glabel)"/><rect x="208.8" y="48.2" width="14" height="9.2" fill="#d9dde6" stroke="#5f6fc8" stroke-width="0.6"/><rect x="210.8" y="50" width="2.2" height="5.6" fill="#1f3fd0"/>
<rect x="249.4" y="33.3" width="24.6" height="24.8" rx="2.6" fill="url(#gflop)" stroke="#1c2aa8" stroke-width="1.1"/><rect x="253.0" y="34.6" width="17.6" height="11.6" fill="url(#glabel)"/><rect x="254.8" y="48.2" width="14" height="9.2" fill="#d9dde6" stroke="#5f6fc8" stroke-width="0.6"/><rect x="256.8" y="50" width="2.2" height="5.6" fill="#1f3fd0"/>
<g transform="translate(259.5 51.5) rotate(-45)"><path d="M0 0 L4.4 -2.6 L20.5 -2.6 L20.5 2.6 L4.4 2.6 Z" fill="url(#gpencil)" stroke="#a05e10" stroke-width="0.6"/><path d="M0 0 L4.4 -2.6 L4.4 2.6 Z" fill="#f3d9a8"/><path d="M0 0 L1.8 -1 L1.8 1 Z" fill="#333"/><rect x="20.5" y="-2.6" width="2.4" height="5.2" rx="1" fill="#e85050"/><path d="M19.6 -2.6 V2.6" stroke="#e8d8c0" stroke-width="0.9"/><path d="M5 -1.1 H19" stroke="#ffd890" stroke-width="1.2"/></g>
<g fill="#0a0a0a" stroke="#0a0a0a" stroke-width="5.4" stroke-linecap="round">
<circle cx="317.9" cy="37.0" r="3.1" stroke-width="1.6"/>
<path d="M318 46 L317.9 37.0"/>
<circle cx="311.0" cy="39.8" r="3.0" stroke-width="1.6"/>
<path d="M318 46 L311.0 39.8"/>
<circle cx="324.9" cy="39.8" r="3.0" stroke-width="1.6"/>
<path d="M318 46 L324.9 39.8"/>
<circle cx="308.8" cy="45.2" r="2.2" stroke-width="1.6"/>
<path d="M318 46 L308.8 45.2"/>
<circle cx="327.2" cy="45.2" r="2.2" stroke-width="1.6"/>
<path d="M318 46 L327.2 45.2"/>
</g>
<path d="M306 47 Q306 43.2 309.6 43.2 H326.4 Q330 43.2 330 47 V54.4 Q330 58 326.4 58 H309.6 Q306 58 306 54.4 Z" fill="#0a0a0a"/>
<g fill="#f9a824" stroke="#f9a824" stroke-width="3.2" stroke-linecap="round">
<circle cx="317.9" cy="37.0" r="2.4" stroke="none"/>
<path d="M318 45.6 L317.9 37.0"/>
<circle cx="311.0" cy="39.8" r="2.3" stroke="none"/>
<path d="M318 45.6 L311.0 39.8"/>
<circle cx="324.9" cy="39.8" r="2.3" stroke="none"/>
<path d="M318 45.6 L324.9 39.8"/>
<circle cx="308.8" cy="45.2" r="1.5" stroke="none"/>
<path d="M318 45.6 L308.8 45.2"/>
<circle cx="327.2" cy="45.2" r="1.5" stroke="none"/>
<path d="M318 45.6 L327.2 45.2"/>
</g>
<rect x="307.6" y="44.2" width="20.8" height="1.8" fill="#f9a824"/>
<text x="318.2" y="57.4" text-anchor="middle" font-family="'Liberation Sans',sans-serif" font-weight="700" font-size="15.4" textLength="18.4" lengthAdjust="spacingAndGlyphs" fill="#fff">SVG</text>
<rect x="372" y="32.5" width="12" height="14" fill="#f1f1f1" stroke="#b5b5b5" stroke-width="0.7"/>
<path d="M361 49 Q361 44.5 365 44.5 H384 Q388 44.5 388 49 V54.5 Q388 57 385.5 57 H363.5 Q361 57 361 54.5 Z" fill="#dcdcdc" stroke="#9a9a9a" stroke-width="0.8"/>
<rect x="363" y="50.2" width="23" height="4.2" rx="1" fill="#f4f4f4" stroke="#aaa" stroke-width="0.5"/>
<path d="M375.4 46.4 L381.6 51.8" stroke="#f2f2f2" stroke-width="4.4" stroke-linecap="round"/><path d="M375.4 46.4 L381.6 51.8" stroke="#9a9a9a" stroke-width="2.6" stroke-linecap="round"/>
<circle cx="369.8" cy="40.7" r="8" fill="#f4f4f2" opacity="0.9"/><circle cx="369.8" cy="40.7" r="6.3" fill="#c3d8f3" stroke="#5a88d0" stroke-width="1.1"/>
<circle cx="368.8" cy="39.2" r="3.4" fill="#e9f1fc" opacity="0.85"/>
<path d="M414.5 37.4 L419.2 42 Q427 32.6 435.6 33.7 Q443.6 35.6 443 44.4 Q441.6 55 427 57.7 Q436.4 53.4 437.5 46.4 Q437.2 40.6 432 40.6 Q427.6 41 423.6 46.6 L428.2 51.8 L414.5 51.8 Z" fill="url(#ggreen)" stroke="#1b7e2c" stroke-width="0.8" stroke-linejoin="round"/>
<g transform="translate(903.6 0) scale(-1 1)"><path d="M414.5 37.4 L419.2 42 Q427 32.6 435.6 33.7 Q443.6 35.6 443 44.4 Q441.6 55 427 57.7 Q436.4 53.4 437.5 46.4 Q437.2 40.6 432 40.6 Q427.6 41 423.6 46.6 L428.2 51.8 L414.5 51.8 Z" fill="url(#ggreen2)" stroke="#86c492" stroke-width="0.8" stroke-linejoin="round"/></g>
<ellipse cx="532.4" cy="57.2" rx="11.6" ry="1.4" fill="#f6f2f2" opacity="0.9"/>
<g transform="translate(521 54.6) rotate(-43)"><rect x="-3" y="-3.8" width="30" height="7.6" rx="1" fill="#cc1414" stroke="#8c1010" stroke-width="0.5"/><rect x="3" y="-1.3" width="23" height="2.6" fill="#fbf7f7"/><rect x="-3" y="-3.8" width="6.4" height="7.6" rx="0.8" fill="#f7f7f7" stroke="#b0b0b0" stroke-width="0.5"/><path d="M26.2 -3.6 V3.6" stroke="#6a5a5a" stroke-width="1.4"/></g>
<path d="M586.6 32 L590.6 30.6 L590.2 45.2 L586.4 47.6 Z" fill="#efefef" stroke="#8a8a8a" stroke-width="0.7"/>
<path d="M600.2 37 L601 40.2 L589.6 47 L588.8 43 Z" fill="#efefef" stroke="#8a8a8a" stroke-width="0.7"/>
<path d="M588.2 45.8 L583 46.6 M588 46.6 L589 50.6" stroke="#d81e1e" stroke-width="2.8" stroke-linecap="round" fill="none"/>
<ellipse cx="579" cy="48" rx="5.3" ry="3.2" transform="rotate(-18 579 48)" fill="none" stroke="#d81e1e" stroke-width="2.6"/>
<ellipse cx="589.3" cy="55.2" rx="3.1" ry="5.2" transform="rotate(-6 589.3 55.2)" fill="none" stroke="#d81e1e" stroke-width="2.6"/>
<path d="M573.4 57.6 H579.4 M576.4 54.6 V60.6" stroke="#000" stroke-width="1.1"/>
<rect x="618.5" y="30.8" width="20" height="24" rx="1" fill="#f7f7f7" stroke="#bdbdbd" stroke-width="0.8"/>
<path d="M621.5 36 H635 M621.5 38.6 H635 M621.5 41.2 H635" stroke="#d4d4d4" stroke-width="1"/>
<path d="M627 36.8 H647.6 V56 L642.6 61 H627 Z" fill="#f6f6f6" stroke="#a8a8a8" stroke-width="0.8"/>
<path d="M642.6 61 V56 H647.6 Z" fill="#bfbfbf" stroke="#9a9a9a" stroke-width="0.5"/>
<path d="M630.5 43 H644 M630.5 45.6 H644 M630.5 48.2 H644 M630.5 50.8 H644" stroke="#c6c6c6" stroke-width="1"/>
<path d="M619.4 56.6 H625.4 M622.4 53.6 V59.6" stroke="#000" stroke-width="1.1"/>
<rect x="666" y="33" width="26" height="27.4" rx="1.8" fill="#bb7c22" stroke="#8f5e18" stroke-width="1"/>
<path d="M669.4 36 H688.6 V57.6 H669.4 Z" fill="#f4f4f2" stroke="#c6c6c6" stroke-width="0.5"/>
<path d="M684 57.6 L688.6 53 V57.6 Z" fill="#a8a8a8"/>
<path d="M672.6 41.6 H685.4 M672.6 44.4 H685.4 M672.6 47.2 H685.4 M672.6 50 H683" stroke="#d0d0d0" stroke-width="1"/>
<rect x="675" y="29.8" width="7.6" height="3" rx="1" fill="#8e8e86"/><rect x="672.4" y="31.2" width="12.8" height="5.4" rx="1.2" fill="#a3a39b" stroke="#7a7a72" stroke-width="0.6"/>
<path d="M723 56.4 H745" stroke="#ff1010" stroke-width="1.2"/>
<g transform="translate(724.8 54.8) rotate(-43)"><path d="M0 0 L6 -3.9 L19 -3.9 L19 3.9 L6 3.9 Z" fill="#d42a1a" stroke="#7a2a10" stroke-width="0.7"/><path d="M0 0 L6 -3.9 L6 3.9 Z" fill="#f0c88c" stroke="#8a5a2c" stroke-width="0.5"/><path d="M0 0 L2.6 -1.7 L2.6 1.7 Z" fill="#222"/><path d="M7 -1.4 H18.6" stroke="#f47a6a" stroke-width="1.8"/><rect x="19" y="-3.9" width="2" height="7.8" fill="#d4d4d4" stroke="#8a8a8a" stroke-width="0.4"/><rect x="21" y="-3.9" width="3.2" height="7.8" rx="1.4" fill="#e03428" stroke="#7a2a10" stroke-width="0.6"/></g>
<rect x="765.6" y="36" width="28.4" height="21" fill="#00007e" stroke="#1a1a2a" stroke-width="1.2"/>
<path d="M769.4 53.8 L791 40" fill="none" stroke="#fff" stroke-width="1.3"/><path d="M791 40 V53.8 H769.4" fill="none" stroke="#fff" stroke-width="1.3" stroke-dasharray="3 1.6"/>
<path d="M832.5 34.74 A13 13 0 1 1 813 46" fill="none" stroke="#000" stroke-width="2"/><path d="M813 46 A13 13 0 0 1 832.5 34.74" fill="none" stroke="#000" stroke-width="2" stroke-dasharray="3.2 0.9"/>
<path d="M812.4 60 L840.2 32.2" stroke="#1414f0" stroke-width="1.2"/>
<g fill="#000">
<rect x="870.2" y="33.2" width="1.6" height="1.6"/>
<rect x="870.2" y="41.4" width="1.6" height="1.6"/>
<rect x="870.2" y="49.5" width="1.6" height="1.6"/>
<rect x="870.2" y="57.7" width="1.6" height="1.6"/>
<rect x="878.3" y="33.2" width="1.6" height="1.6"/>
<rect x="878.3" y="41.4" width="1.6" height="1.6"/>
<rect x="878.3" y="49.5" width="1.6" height="1.6"/>
<rect x="878.3" y="57.7" width="1.6" height="1.6"/>
<rect x="886.4" y="33.2" width="1.6" height="1.6"/>
<rect x="886.4" y="41.4" width="1.6" height="1.6"/>
<rect x="886.4" y="49.5" width="1.6" height="1.6"/>
<rect x="886.4" y="57.7" width="1.6" height="1.6"/>
<rect x="894.5" y="33.2" width="1.6" height="1.6"/>
<rect x="894.5" y="41.4" width="1.6" height="1.6"/>
<rect x="894.5" y="49.5" width="1.6" height="1.6"/>
<rect x="894.5" y="57.7" width="1.6" height="1.6"/>
</g>
<path d="M943.1 49.6 L945.6 51.6" stroke="#bdbdbd" stroke-width="3" stroke-linecap="round"/><path d="M946.1 52.1 L952.0 57.0" stroke="#666" stroke-width="4.6" stroke-linecap="round"/><path d="M945.9 51.2 L951.6 55.6" stroke="#8c8c8c" stroke-width="1.6" stroke-linecap="round"/><circle cx="936.6" cy="42.6" r="11.4" fill="#e9e9e6" stroke="#a9a9a4" stroke-width="1"/><circle cx="936.6" cy="42.6" r="9.2" fill="url(#glens)" stroke="#8ea7c8" stroke-width="0.8"/><path d="M930.6 41 H935 V36.6 H938.2 V41 H942.6 V44.2 H938.2 V48.6 H935 V44.2 H930.6 Z" fill="#fff" stroke="#6f9ad8" stroke-width="0.5"/>
<path d="M989.1 49.6 L991.6 51.6" stroke="#bdbdbd" stroke-width="3" stroke-linecap="round"/><path d="M992.1 52.1 L998.0 57.0" stroke="#666" stroke-width="4.6" stroke-linecap="round"/><path d="M991.9 51.2 L997.6 55.6" stroke="#8c8c8c" stroke-width="1.6" stroke-linecap="round"/><circle cx="982.6" cy="42.6" r="11.4" fill="#e9e9e6" stroke="#a9a9a4" stroke-width="1"/><circle cx="982.6" cy="42.6" r="9.2" fill="url(#glens)" stroke="#8ea7c8" stroke-width="0.8"/><rect x="976.6" y="41" width="12" height="3.2" fill="#fff" stroke="#6f9ad8" stroke-width="0.5"/>
<path d="M1035.1 49.6 L1037.6 51.6" stroke="#bdbdbd" stroke-width="3" stroke-linecap="round"/><path d="M1038.1 52.1 L1044.0 57.0" stroke="#666" stroke-width="4.6" stroke-linecap="round"/><path d="M1037.9 51.2 L1043.6 55.6" stroke="#8c8c8c" stroke-width="1.6" stroke-linecap="round"/><circle cx="1028.6" cy="42.6" r="11.4" fill="#e9e9e6" stroke="#a9a9a4" stroke-width="1"/><circle cx="1028.6" cy="42.6" r="9.2" fill="url(#glens)" stroke="#8ea7c8" stroke-width="0.8"/><rect x="1025.6" y="39.6" width="6" height="6" fill="#7fa6e0"/><path d="M1023.4 41.0 V37.4 H1027.0 M1023.4 44.2 V47.8 H1027.0 M1033.8 41.0 V37.4 H1030.2 M1033.8 44.2 V47.8 H1030.2 " fill="none" stroke="#fff" stroke-width="2.4"/>
<path d="M1081.1 49.6 L1083.6 51.6" stroke="#bdbdbd" stroke-width="3" stroke-linecap="round"/><path d="M1084.1 52.1 L1090.0 57.0" stroke="#666" stroke-width="4.6" stroke-linecap="round"/><path d="M1083.9 51.2 L1089.6 55.6" stroke="#8c8c8c" stroke-width="1.6" stroke-linecap="round"/><circle cx="1074.6" cy="42.6" r="11.4" fill="#e9e9e6" stroke="#a9a9a4" stroke-width="1"/><circle cx="1074.6" cy="42.6" r="9.2" fill="url(#glens)" stroke="#8ea7c8" stroke-width="0.8"/><rect x="1071.6" y="39.6" width="6" height="6" fill="#7fa6e0"/><path d="M1069.4 41.0 V37.4 H1073.0 M1069.4 44.2 V47.8 H1073.0 M1079.8 41.0 V37.4 H1076.2 M1079.8 44.2 V47.8 H1076.2 " fill="none" stroke="#ee1018" stroke-width="2.6"/>
<path d="M1127.1 49.6 L1129.6 51.6" stroke="#bdbdbd" stroke-width="3" stroke-linecap="round"/><path d="M1130.1 52.1 L1136.0 57.0" stroke="#666" stroke-width="4.6" stroke-linecap="round"/><path d="M1129.9 51.2 L1135.6 55.6" stroke="#8c8c8c" stroke-width="1.6" stroke-linecap="round"/><circle cx="1120.6" cy="42.6" r="11.4" fill="#e9e9e6" stroke="#a9a9a4" stroke-width="1"/><circle cx="1120.6" cy="42.6" r="9.2" fill="url(#glens)" stroke="#8ea7c8" stroke-width="0.8"/><path d="M1113.6 42.6 L1120 37 V40.6 H1127 V44.6 H1120 V48.2 Z" fill="#fff" stroke="#6f9ad8" stroke-width="0.5"/>
<rect x="1154.4" y="31" width="27.4" height="17.4" rx="1" fill="#fff" stroke="#8eb0e4" stroke-width="1"/>
<path d="M1175.4 51.6 L1180.8 56.4" stroke="#555" stroke-width="4" stroke-linecap="round"/>
<path d="M1175 50.8 L1180.6 55.6" stroke="#8c8c8c" stroke-width="1.5" stroke-linecap="round"/>
<circle cx="1168.2" cy="44.6" r="9.2" fill="#e9e9e6" stroke="#a9a9a4" stroke-width="0.9"/>
<circle cx="1168.2" cy="44.6" r="7.4" fill="url(#glens)" stroke="#8ea7c8" stroke-width="0.7"/>
<path d="M1161 45.4 Q1168.2 48.8 1175.4 45.4 Q1174 52 1168.2 52 Q1162.4 52 1161 45.4 Z" fill="#3f78cc" opacity="0.55"/>
<path d="M1219.7 50.0 L1222.2 52.0" stroke="#bdbdbd" stroke-width="3" stroke-linecap="round"/><path d="M1222.7 52.5 L1228.6 57.4" stroke="#666" stroke-width="4.6" stroke-linecap="round"/><path d="M1222.5 51.6 L1228.2 56.0" stroke="#8c8c8c" stroke-width="1.6" stroke-linecap="round"/><circle cx="1213.2" cy="43.0" r="11.4" fill="#e9e9e6" stroke="#a9a9a4" stroke-width="1"/><circle cx="1213.2" cy="43.0" r="9.2" fill="url(#glens)" stroke="#8ea7c8" stroke-width="0.8"/><path d="M1213.2 30.6 L1217.4 35.8 H1214.8 V41.4 H1220.4 V38.8 L1225.6 43 L1220.4 47.2 V44.6 H1214.8 V50.2 H1217.4 L1213.2 55.4 L1209 50.2 H1211.6 V44.6 H1206 V47.2 L1200.8 43 L1206 38.8 V41.4 H1211.6 V35.8 H1209 Z" fill="#fff" stroke="#4f86d8" stroke-width="0.7"/>
<rect x="15" y="73" width="43" height="31.4" rx="6" fill="url(#gbtn2)" stroke="#8b8b8b" stroke-width="1.8"/>
<path d="M31.0 79.4 L31.0 93.8 L34.3 90.8 L36.7 96.5 L39.1 95.5 L36.7 90.0 L40.9 90.0 Z" fill="#fff" stroke="#333" stroke-width="1.0" stroke-linejoin="round"/>
<g fill="#9c9c9c"><rect x="7.2" y="116.2" width="1.6" height="1.6"/><rect x="12.7" y="116.2" width="1.6" height="1.6"/><rect x="18.2" y="116.2" width="1.6" height="1.6"/><rect x="23.7" y="116.2" width="1.6" height="1.6"/><rect x="29.2" y="116.2" width="1.6" height="1.6"/><rect x="34.7" y="116.2" width="1.6" height="1.6"/><rect x="40.2" y="116.2" width="1.6" height="1.6"/><rect x="45.7" y="116.2" width="1.6" height="1.6"/><rect x="51.2" y="116.2" width="1.6" height="1.6"/><rect x="56.7" y="116.2" width="1.6" height="1.6"/><rect x="62.2" y="116.2" width="1.6" height="1.6"/></g>
<path d="M8.6 131 H14.6 M11.6 128 V134 M22 140 H28 M25 137 V143 M9 146.6 H15 M12 143.6 V149.6" fill="none" stroke="#222" stroke-width="1.1"/>
<path d="M41.5 144.6 L65 134" fill="none" stroke="#222" stroke-width="1.1"/>
<path d="M7.8 183.2 Q9.5 166.5 27.4 163.6" fill="none" stroke="#222" stroke-width="1.1"/>
<circle cx="52.6" cy="173.4" r="9.9" fill="none" stroke="#222" stroke-width="1.1"/>
<ellipse cx="18.3" cy="209" rx="13.6" ry="5.6" transform="rotate(-45 18.3 209)" fill="none" stroke="#222" stroke-width="1.1"/>
<path d="M41.4 201.6 Q44.4 196.2 50 207.4 Q57.6 222.6 62.6 213.4 Q66.4 203.4 60.4 199.6 Q56 198.6 52.6 207 Q48.6 220 46.6 217.6 Q42.6 212 41.4 201.6 Z" fill="none" stroke="#222" stroke-width="1.1"/>
<path d="M14.4 238.2 Q8.4 238.6 8.4 242.8 Q8.6 247 14 247 L27.6 248.2" fill="none" stroke="#222" stroke-width="1.1"/>
<path d="M43.4 232.2 H51.4 L55 238.2 L51.4 244.2 H43.4 L40 238.2 Z M60.4 236.4 L66.2 245.6 H54.8 Z M41.2 249.4 H55.2 V256 H41.2 Z" fill="none" stroke="#222" stroke-width="1.1"/>
<path d="M13 272 H28.4 V286.4 H7.8 V280.4 Z" fill="url(#hatch)" stroke="#222" stroke-width="1"/>
<circle cx="20.4" cy="279.6" r="3.1" fill="#f0f0f0" stroke="#222" stroke-width="1"/>
<text x="18.2" y="332" text-anchor="middle" font-family="'Liberation Serif',serif" font-size="28.5" fill="#111">A</text>
<path d="M43.6 314 V329.6 M61.8 314 V329.6 M44 316.2 H61.4" fill="none" stroke="#111" stroke-width="1.2"/>
<path d="M43.8 316.2 L48 314.4 V318 Z M61.6 316.2 L57.4 314.4 V318 Z" fill="#111"/>
<rect x="7.2" y="349.2" width="21.8" height="15.8" fill="#fff" stroke="#111" stroke-width="1.4"/>
<path d="M9.4 362.4 L14.6 354.6 L18 358.6 L21 356.4 L26.6 362.4 Z" fill="#111"/>
<circle cx="24.2" cy="353" r="1.5" fill="#111"/>
<path d="M5.4 389.6 V411.6 H26 Z M9.2 401 V408 H15.8 Z" fill="none" stroke="#111" stroke-width="1.2"/>
<g transform="translate(20.6 398.4) rotate(-135)"><path d="M0 0 L3 -2.4 L13 -2.4 L13 2.4 L3 2.4 Z" fill="#d81c1c" stroke="#7c1010" stroke-width="0.5"/><path d="M0 0 L3 -2.4 V2.4 Z" fill="#efc58a"/><rect x="13" y="-2.4" width="2.6" height="4.8" rx="0.8" fill="#e44"/></g>
<path d="M27 386.6 V390 M27 390 L23.8 405.6 M27 390 L30 405.6 M25.6 389.6 H28.4" fill="none" stroke="#111" stroke-width="1.1"/>
<rect x="41.6" y="395.6" width="23.4" height="8.4" rx="0.8" fill="#fafafa" stroke="#8e8e8e" stroke-width="1"/>
<path d="M43.6 396 V399.6 M45.8 396 V398.0 M47.9 396 V398.0 M50.0 396 V398.0 M52.2 396 V398.0 M54.4 396 V399.6 M56.5 396 V398.0 M58.6 396 V398.0 M60.8 396 V398.0 M63.0 396 V398.0" stroke="#666" stroke-width="0.7" fill="none"/>
<rect x="8" y="426" width="16.4" height="12.6" fill="#fbf1c4" stroke="#222" stroke-width="1"/>
<circle cx="22.2" cy="437" r="6.6" fill="#fbf1c4" stroke="#222" stroke-width="1"/>
<path d="M15.6 430.4 H24.4 V438.6" fill="none" stroke="#222" stroke-width="1"/>
<circle cx="8" cy="438.6" r="1.4" fill="#f02020"/>
<path d="M41.6 433.6 L59.6 423.6" stroke="#f02020" stroke-width="1.2" fill="none"/>
<path d="M51.6 429.4 L51.6 441.8 L54.4 439.2 L56.5 444.1 L58.5 443.2 L56.5 438.5 L60.1 438.5 Z" fill="#f4f4f4" stroke="#777" stroke-width="0.9" stroke-linejoin="round"/>
<path d="M18.8 467.6 L29.2 472.6 V483.6 L17 488.6 L8 483.8 V473 Z M8 473 L17 478 L29.2 472.6 M17 478 V488.6" fill="none" stroke="#222" stroke-width="1.1" stroke-linejoin="round"/>
<circle cx="1163.9" cy="118" r="7" fill="#5a5a5a"/>
<path d="M1160.8 114.9 L1167.0 121.1 M1167.0 114.9 L1160.8 121.1" stroke="#fff" stroke-width="1.9" stroke-linecap="round"/>
<circle cx="1181.9" cy="118" r="7" fill="#5a5a5a"/>
<path d="M1178.3 117.4 H1183.3 V121.4 H1178.3 Z M1180.5 117 V115 H1185.5 V119.4 H1183.7" fill="none" stroke="#fff" stroke-width="1.1"/>
<path d="M1177.6 143.8 Q1180.6 136.8 1186.0 137.6 Q1191.0 138.4 1192.4 144.2 Q1189.4 149.0 1184.4 148.4 Q1179.4 147.6 1177.6 143.8 Z" fill="#000"/><path d="M1179.6 144.0 Q1184.6 138.6 1190.6 144.2 Q1185.4 148.4 1179.6 144.0 Z" fill="#fff"/><circle cx="1185.1" cy="143.0" r="2.9" fill="#000"/><circle cx="1184.1" cy="142.2" r="0.8" fill="#fff"/>
<g opacity="0.38"><path d="M1237.6 143.8 Q1240.6 136.8 1246.0 137.6 Q1251.0 138.4 1252.4 144.2 Q1249.4 149.0 1244.4 148.4 Q1239.4 147.6 1237.6 143.8 Z" fill="#555"/><path d="M1239.6 144.0 Q1244.6 138.6 1250.6 144.2 Q1245.4 148.4 1239.6 144.0 Z" fill="#fff"/><circle cx="1245.1" cy="143.0" r="2.9" fill="#555"/><circle cx="1244.1" cy="142.2" r="0.8" fill="#fff"/></g>
<path d="M1299 143.4 H1311 M1305 137.4 V149.4" stroke="#e01010" stroke-width="3" fill="none"/>
<path d="M1359 143.4 H1371" stroke="#e01010" stroke-width="3" fill="none"/>
<g transform="translate(1417.8 149.9) rotate(-44.2)"><path d="M0 0 L3.6 -1.7 L17.2 -1.7 L17.2 1.7 L3.6 1.7 Z" fill="#dea030" stroke="#9c6a14" stroke-width="0.5"/><path d="M0 0 L3.6 -1.7 V1.7 Z" fill="#ecd3a2"/><path d="M0 0 L1.5 -0.7 V0.7 Z" fill="#4a3a20"/><rect x="17.2" y="-1.7" width="2.6" height="3.4" rx="0.8" fill="#e62a2a"/></g>
<path d="M1415.5 167.2 Q1418.5 160.2 1423.9 161.0 Q1428.9 161.8 1430.3 167.6 Q1427.3 172.4 1422.3 171.8 Q1417.3 171.0 1415.5 167.2 Z" fill="#000"/><path d="M1417.5 167.4 Q1422.5 162.0 1428.5 167.6 Q1423.3 171.8 1417.5 167.4 Z" fill="#fff"/><circle cx="1423.0" cy="166.4" r="2.9" fill="#000"/><circle cx="1422.0" cy="165.6" r="0.8" fill="#fff"/>
<path d="M1441.9 168.0 V164.0 Q1441.9 160.8 1445.0 160.8 Q1448.1 160.8 1448.1 164.0 V168.0" fill="none" stroke="#b9b9b9" stroke-width="1.3"/><rect x="1440.2" y="167.4" width="9.6" height="6.8" fill="#b7b7b7"/>
<path d="M1415.5 187.2 Q1418.5 180.2 1423.9 181.0 Q1428.9 181.8 1430.3 187.6 Q1427.3 192.4 1422.3 191.8 Q1417.3 191.0 1415.5 187.2 Z" fill="#000"/><path d="M1417.5 187.4 Q1422.5 182.0 1428.5 187.6 Q1423.3 191.8 1417.5 187.4 Z" fill="#fff"/><circle cx="1423.0" cy="186.4" r="2.9" fill="#000"/><circle cx="1422.0" cy="185.6" r="0.8" fill="#fff"/>
<path d="M1441.9 188.0 V184.0 Q1441.9 180.8 1445.0 180.8 Q1448.1 180.8 1448.1 184.0 V188.0" fill="none" stroke="#b9b9b9" stroke-width="1.3"/><rect x="1440.2" y="187.4" width="9.6" height="6.8" fill="#b7b7b7"/>
<path d="M1415.5 207.2 Q1418.5 200.2 1423.9 201.0 Q1428.9 201.8 1430.3 207.6 Q1427.3 212.4 1422.3 211.8 Q1417.3 211.0 1415.5 207.2 Z" fill="#000"/><path d="M1417.5 207.4 Q1422.5 202.0 1428.5 207.6 Q1423.3 211.8 1417.5 207.4 Z" fill="#fff"/><circle cx="1423.0" cy="206.4" r="2.9" fill="#000"/><circle cx="1422.0" cy="205.6" r="0.8" fill="#fff"/>
<path d="M1441.9 208.0 V204.0 Q1441.9 200.8 1445.0 200.8 Q1448.1 200.8 1448.1 204.0 V208.0" fill="none" stroke="#b9b9b9" stroke-width="1.3"/><rect x="1440.2" y="207.4" width="9.6" height="6.8" fill="#b7b7b7"/>
<path d="M1415.5 227.2 Q1418.5 220.2 1423.9 221.0 Q1428.9 221.8 1430.3 227.6 Q1427.3 232.4 1422.3 231.8 Q1417.3 231.0 1415.5 227.2 Z" fill="#000"/><path d="M1417.5 227.4 Q1422.5 222.0 1428.5 227.6 Q1423.3 231.8 1417.5 227.4 Z" fill="#fff"/><circle cx="1423.0" cy="226.4" r="2.9" fill="#000"/><circle cx="1422.0" cy="225.6" r="0.8" fill="#fff"/>
<path d="M1441.9 228.0 V224.0 Q1441.9 220.8 1445.0 220.8 Q1448.1 220.8 1448.1 224.0 V228.0" fill="none" stroke="#b9b9b9" stroke-width="1.3"/><rect x="1440.2" y="227.4" width="9.6" height="6.8" fill="#b7b7b7"/>
<g transform="translate(1394.7 193.4) rotate(-44.8)"><path d="M0 0 L3.6 -1.7 L15.6 -1.7 L15.6 1.7 L3.6 1.7 Z" fill="#dea030" stroke="#9c6a14" stroke-width="0.5"/><path d="M0 0 L3.6 -1.7 V1.7 Z" fill="#ecd3a2"/><path d="M0 0 L1.5 -0.7 V0.7 Z" fill="#4a3a20"/><rect x="15.6" y="-1.7" width="2.6" height="3.4" rx="0.8" fill="#e62a2a"/></g>
<g fill="#9c9c9c"><rect x="1462.0" y="116" width="1.6" height="1.6"/><rect x="1468.2" y="116" width="1.6" height="1.6"/><rect x="1474.4" y="116" width="1.6" height="1.6"/><rect x="1480.6" y="116" width="1.6" height="1.6"/><rect x="1486.8" y="116" width="1.6" height="1.6"/></g>
<rect x="1463.2" y="127.0" width="27.4" height="27.6" fill="#fff" stroke="#3c3c3c" stroke-width="0.9"/><rect x="1463.2" y="127.0" width="27.4" height="4.2" fill="#000"/><rect x="1463.8" y="127.6" width="3" height="3" fill="#fff" stroke="#000" stroke-width="0.4"/><path d="M1470 139 L1478 135 V146 L1470 150 Z M1472.6 138.4 L1480.6 134.4 V145.4 L1472.6 149.4 Z" fill="#ddd" stroke="#444" stroke-width="0.7"/><path d="M1475.2 137.6 L1484 133.4 V145 L1475.2 149.2 Z" fill="#fff" stroke="#444" stroke-width="0.7"/><path d="M1477.4 146 L1482.4 137.6 V143.6 Z" fill="none" stroke="#e83030" stroke-width="0.9"/>
<rect x="1463.2" y="174.2" width="27.4" height="27.6" fill="#fff" stroke="#3c3c3c" stroke-width="0.9"/><rect x="1463.2" y="174.2" width="27.4" height="4.2" fill="#000"/><rect x="1463.8" y="174.8" width="3" height="3" fill="#fff" stroke="#000" stroke-width="0.4"/><rect x="1470.4" y="184.6" width="10.6" height="8" fill="#fbefc0" stroke="#555" stroke-width="0.8"/><circle cx="1479.6" cy="191.6" r="4.4" fill="#fbefc0" stroke="#555" stroke-width="0.8"/>
<rect x="1463.2" y="220.2" width="27.4" height="27.6" fill="#fff" stroke="#3c3c3c" stroke-width="0.9"/><rect x="1463.2" y="220.2" width="27.4" height="4.2" fill="#000"/><rect x="1463.8" y="220.8" width="3" height="3" fill="#fff" stroke="#000" stroke-width="0.4"/><rect x="1468.6" y="229.6" width="16.6" height="11.4" rx="2.4" fill="#f6f6f4" stroke="#c4d2ec" stroke-width="1"/>
<rect x="1463.2" y="276.6" width="27.4" height="27.6" fill="#fff" stroke="#3c3c3c" stroke-width="0.9"/><rect x="1463.2" y="276.6" width="27.4" height="4.2" fill="#000"/><rect x="1463.8" y="277.2" width="3" height="3" fill="#fff" stroke="#000" stroke-width="0.4"/><rect x="1466.6" y="286.4" width="3.6" height="2.6" fill="#111"/><rect x="1472.4" y="286.4" width="14.4" height="2.6" fill="#fff" stroke="#555" stroke-width="0.6"/><rect x="1466.6" y="291.0" width="3.6" height="2.6" fill="#111"/><rect x="1472.4" y="291.0" width="14.4" height="2.6" fill="#fff" stroke="#555" stroke-width="0.6"/><rect x="1466.6" y="295.6" width="3.6" height="2.6" fill="#111"/><rect x="1472.4" y="295.6" width="14.4" height="2.6" fill="#fff" stroke="#555" stroke-width="0.6"/>
<rect x="1463.2" y="322.0" width="27.4" height="27.6" fill="#fff" stroke="#3c3c3c" stroke-width="0.9"/><rect x="1463.2" y="322.0" width="27.4" height="4.2" fill="#000"/><rect x="1463.8" y="322.6" width="3" height="3" fill="#fff" stroke="#000" stroke-width="0.4"/><path d="M1470 331.2 Q1477 328.4 1484 331.2 Q1483 335 1478.4 337.6 V345.4 L1475.6 344 V337.6 Q1471 335 1470 331.2 Z" fill="#9a9a9a" stroke="#555" stroke-width="0.7"/><ellipse cx="1477" cy="331.2" rx="7" ry="1.5" fill="#c8c8c8" stroke="#555" stroke-width="0.5"/>
<rect x="1463.2" y="368.4" width="27.4" height="27.6" fill="#fff" stroke="#3c3c3c" stroke-width="0.9"/><rect x="1463.2" y="368.4" width="27.4" height="4.2" fill="#000"/><rect x="1463.8" y="369.0" width="3" height="3" fill="#fff" stroke="#000" stroke-width="0.4"/><path d="M1469.4 381.2 L1474.4 383.8 V391.4 L1469.4 394 Z" fill="#f2f2f2" stroke="#444" stroke-width="0.7"/><rect x="1474.4" y="383.8" width="10.6" height="7.6" rx="1.6" fill="#8a8a8a" stroke="#555" stroke-width="0.6"/><path d="M1467.6 387.6 H1487" stroke="#f08aa0" stroke-width="0.8" stroke-dasharray="2.2 1"/>
<rect x="1463.2" y="424.8" width="27.4" height="27.6" fill="#fff" stroke="#3c3c3c" stroke-width="0.9"/><rect x="1463.2" y="424.8" width="27.4" height="4.2" fill="#000"/><rect x="1463.8" y="425.4" width="3" height="3" fill="#fff" stroke="#000" stroke-width="0.4"/><rect x="1465.8" y="431.8" width="10.4" height="1.3" fill="#8a8a8a"/><rect x="1465.8" y="435.4" width="9.0" height="1.3" fill="#8a8a8a"/><rect x="1465.8" y="439.0" width="10.8" height="1.3" fill="#8a8a8a"/><rect x="1465.8" y="442.6" width="11.6" height="1.3" fill="#8a8a8a"/><path d="M1463.2 446.2 H1490.6" stroke="#555" stroke-width="0.7"/><rect x="1472" y="448" width="15.6" height="1.5" fill="#666"/><path d="M1467.6 447.4 L1465.6 448.8 L1467.6 450.2" fill="none" stroke="#555" stroke-width="0.6"/>
<rect x="1463.2" y="471.6" width="27.4" height="27.6" fill="#fff" stroke="#3c3c3c" stroke-width="0.9"/><rect x="1463.2" y="471.6" width="27.4" height="4.2" fill="#000"/><rect x="1463.8" y="472.2" width="3" height="3" fill="#fff" stroke="#000" stroke-width="0.4"/><rect x="1470.6" y="481.2" width="12.6" height="14.4" rx="1" fill="#c89850" stroke="#9a6c24" stroke-width="0.7"/><rect x="1472.2" y="483" width="9.4" height="11" fill="#f2f2ee"/><path d="M1474.4 481.6 V479.8 H1479.4 V481.6 Z" fill="#999" stroke="#666" stroke-width="0.4"/><path d="M1473.6 486 H1480.2 M1473.6 488.2 H1480.2 M1473.6 490.4 H1478.6" stroke="#c8c8c8" stroke-width="0.7"/>
<path d="M726 806.2 Q734.8 806.2 734.8 815.4 V826.4 Q734.8 835.6 726 835.6 Q717.2 835.6 717.2 826.4 V815.4 Q717.2 806.2 726 806.2 Z" fill="#fff" stroke="#444" stroke-width="0.9"/><path d="M717.4 819.8 Q726 817.6 734.6 819.8" stroke="#3c3c3c" stroke-width="1.4" fill="none"/><path d="M726 806.4 V818.6" stroke="#3c3c3c" stroke-width="1" fill="none"/><rect x="724.3" y="808.2" width="3.4" height="8" rx="1.6" fill="#fff" stroke="#3c3c3c" stroke-width="0.9"/><rect x="1133.5" y="780.4" width="13" height="9" fill="#eee" stroke="#3a3a3a" stroke-width="0.9"/><rect x="1133.1" y="780" width="13.8" height="2.8" fill="#111"/><circle cx="102.1" cy="118.7" r="5.6" fill="#f4f4f6" stroke="#2a3f86" stroke-width="2"/><path d="M97.3 115.9 A5.6 5.6 0 0 1 105 113.9" fill="none" stroke="#8898c6" stroke-width="2"/><path d="M99.4 120.6 H102 M103 116.6 L104.2 118.4" stroke="#e06a7a" stroke-width="0.8" fill="none"/><path d="M101.4 116 V121" stroke="#b8b8b8" stroke-width="0.7"/><path d="M102.6 119.4 L106.4 123.4" stroke="#f4a81c" stroke-width="2.2" stroke-linecap="round"/><circle cx="107.4" cy="124.4" r="1.2" fill="#e86464"/>
</svg>
</div></body></html>
